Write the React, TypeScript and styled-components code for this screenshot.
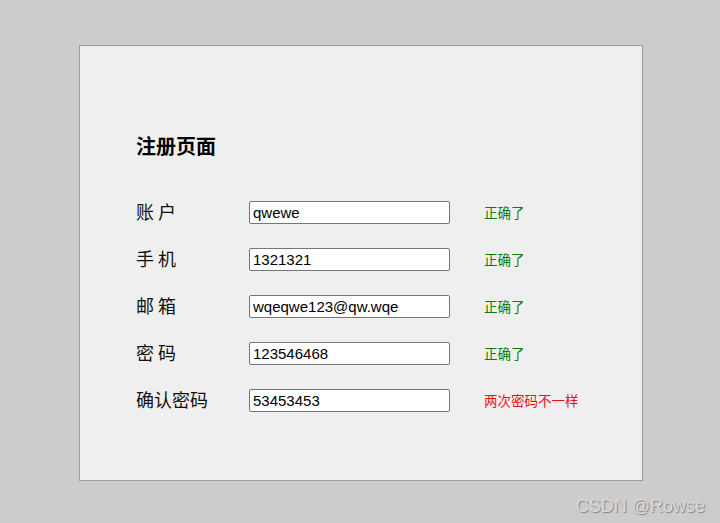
import React from 'react';
import styled, { createGlobalStyle } from 'styled-components';

const GlobalStyle = createGlobalStyle`
  html, body {
    margin: 0;
    background-color: #cccccc;
    font-family: 'Liberation Sans', 'Noto Sans CJK SC', sans-serif;
  }
`;

const fields = [
  { label: '账 户', value: 'qwewe', msg: '正确了', ok: true },
  { label: '手 机', value: '1321321', msg: '正确了', ok: true },
  { label: '邮 箱', value: 'wqeqwe123@qw.wqe', msg: '正确了', ok: true },
  { label: '密 码', value: '123546468', msg: '正确了', ok: true },
  { label: '确认密码', value: '53453453', msg: '两次密码不一样', ok: false },
];

const App = () => {
  return (
    <Page>
      <GlobalStyle />
      <Panel>
        <Title>注册页面</Title>
        <Form>
          {fields.map((f) => (
            <Row key={f.label}>
              <Label>{f.label}</Label>
              <Input type="text" defaultValue={f.value} />
              <Message ok={f.ok}>{f.msg}</Message>
            </Row>
          ))}
        </Form>
      </Panel>
      <Watermark>CSDN @Rowse</Watermark>
    </Page>
  );
};

const Page = styled.div`
  position: relative;
  height: 523px;
  padding: 45px 0 0 79px;
  box-sizing: border-box;
`;

const Panel = styled.div`
  width: 564px;
  height: 436px;
  box-sizing: border-box;
  border: 1px solid #9c9c9c;
  background-color: #efefef;
  padding: 88px 0 0 56px;
`;

const Title = styled.h2`
  margin: 0;
  font-family: 'Noto Sans CJK SC', sans-serif;
  font-size: 20px;
  line-height: 24px;
  font-weight: bold;
  color: #000;
`;

const Form = styled.div`
  margin-top: 31px;
  display: flex;
  flex-direction: column;
`;

const Row = styled.div`
  display: grid;
  grid-template-columns: 79px 201px auto;
  column-gap: 34px;
  align-items: center;
  height: 47px;
`;

const Label = styled.span`
  font-family: 'Noto Sans CJK SC', sans-serif;
  font-size: 18px;
  line-height: 1;
  margin-top: -3px;
  color: #111;
  white-space: pre;
`;

const Input = styled.input`
  box-sizing: border-box;
  width: 201px;
  height: 23px;
  margin: 0;
  padding: 0 3px;
  border: 1px solid #767676;
  border-radius: 2px;
  background: #fff;
  font-family: 'Liberation Sans', sans-serif;
  font-size: 15px;
  color: #000;
  outline: none;
`;

const Message = styled.span<{ ok: boolean }>`
  font-family: 'Noto Sans CJK SC', sans-serif;
  font-size: 13.5px;
  line-height: 1;
  color: ${(p) => (p.ok ? '#0a7d0a' : '#f01010')};
`;

const Watermark = styled.div`
  position: absolute;
  right: 15px;
  bottom: 6px;
  font-family: 'Liberation Sans', sans-serif;
  font-size: 18px;
  color: #d9d9d9;
  text-shadow: 1px 1px 1px rgba(0, 0, 0, 0.35);
`;

export default App;
